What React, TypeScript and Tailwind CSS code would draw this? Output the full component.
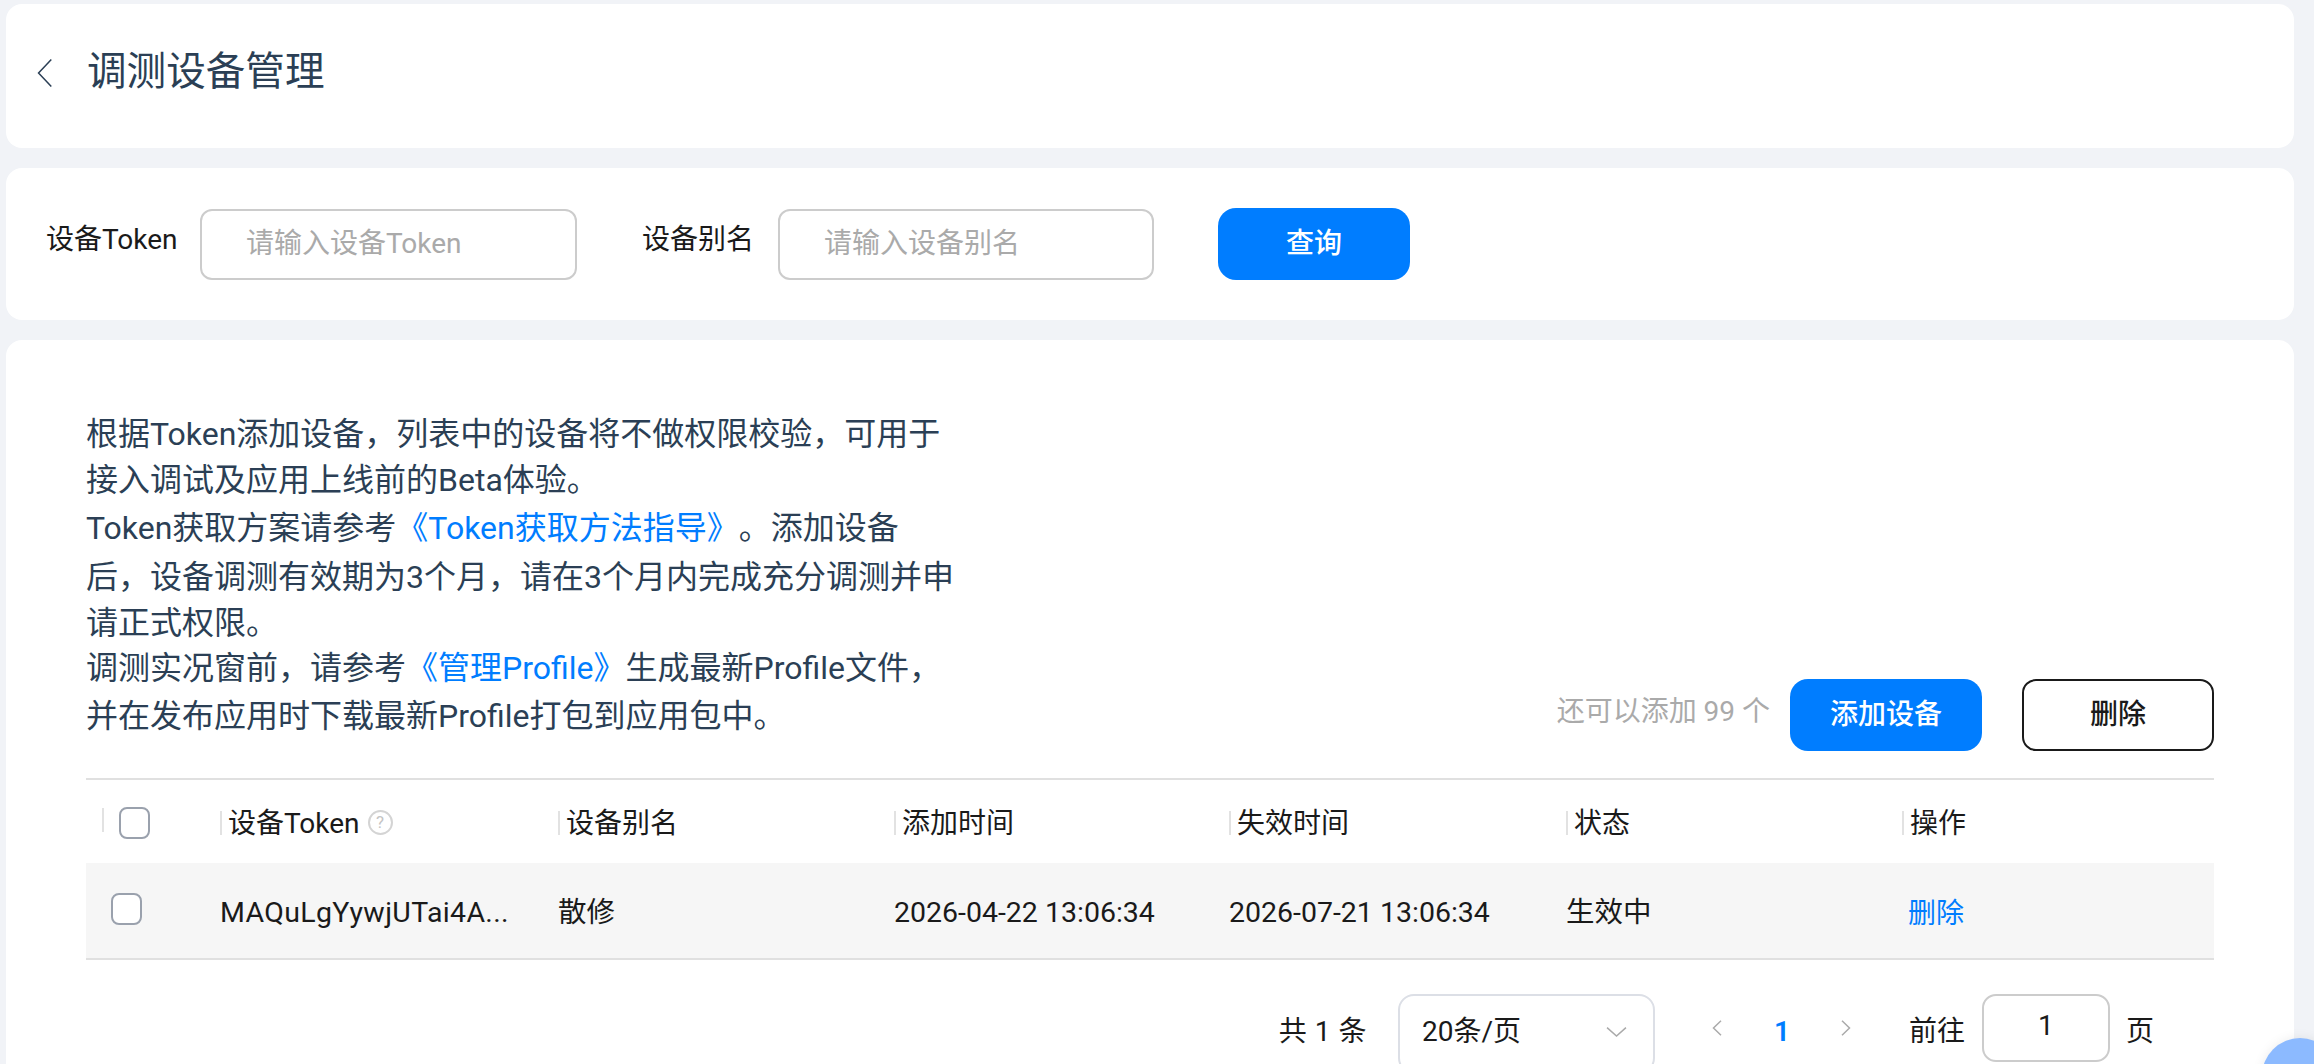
const cjk = "font-['Roboto','Noto_Sans_CJK_SC',sans-serif]";

const columns = ["设备别名", "添加时间", "失效时间", "状态", "操作"];

function Checkbox({ className }: { className: string }) {
    return <div className={`w-[31px] h-[32px] rounded-[8px] border-2 border-[#9aa1ad] bg-white ${className}`} />;
}

function Chevron({ d, className }: { d: string; className: string }) {
    return (
        <svg viewBox="0 0 20 20" preserveAspectRatio="none" className={className} fill="none" stroke="currentColor" strokeWidth="1.5">
            <path d={d} vectorEffect="non-scaling-stroke" />
        </svg>
    );
}

function HeaderCell({ label, children }: { label: string; children?: React.ReactNode }) {
    return (
        <div className="flex items-center h-full">
            <span className="w-[2px] h-[24px] bg-[#e2e2e2] mr-[6px] mt-[2px]" />
            <span className="pt-[4px]">{label}</span>
            {children}
        </div>
    );
}

export default function App() {
    return (
        <div className={`w-[2314px] h-[1064px] overflow-hidden relative bg-[#f1f3f7] pl-[6px] pr-[20px] pt-[4px] flex flex-col gap-[20px] text-[28px] leading-none text-[#1a1a1a] ${cjk}`}>
            <div className="h-[144px] shrink-0 bg-white rounded-[16px] flex items-center pl-[30px] text-[#2b3f55]">
                <Chevron d="M18 1 L3 10 L18 19" className="w-[17px] h-[30px] mb-[6px]" />
                <h1 className="ml-[34px] text-[39.6px] pb-[8px]">调测设备管理</h1>
            </div>

            <div className="h-[152px] shrink-0 bg-white rounded-[16px] flex items-center pl-[40px]">
                <label className="w-[154px] pb-[8px]">设备Token</label>
                <div className="w-[377px] h-[71px] border-2 border-[#cccccc] rounded-[12px] flex items-center pl-[44px] text-[#aaaaaa]">请输入设备Token</div>
                <label className="ml-[65px] w-[136px] pb-[8px]">设备别名</label>
                <div className="w-[376px] h-[71px] border-2 border-[#cccccc] rounded-[12px] flex items-center pl-[44px] text-[#aaaaaa]">请输入设备别名</div>
                <button className="ml-[64px] w-[192px] h-[72px] rounded-[18px] bg-[#007dff] text-white font-medium">查询</button>
            </div>

            <div className="flex-1 bg-white rounded-t-[16px] pl-[80px] pr-[80px]">
                <div className="flex items-end justify-between h-[440px] pb-[26px] border-b-2 border-[#e0e0e0]">
                    <div className="text-[#2b3f55] text-[32px] mb-[11px]">
                        <p className="h-[46px] flex items-center whitespace-pre">根据Token添加设备，列表中的设备将不做权限校验，可用于</p>
                        <p className="h-[46px] flex items-center whitespace-pre">接入调试及应用上线前的Beta体验。</p>
                        <p className="h-[50px] flex items-center whitespace-pre">
                            Token获取方案请参考<span className="text-[#007dff]">《Token获取方法指导》</span>。添加设备
                        </p>
                        <p className="h-[48px] flex items-center whitespace-pre">后，设备调测有效期为3个月，请在3个月内完成充分调测并申</p>
                        <p className="h-[44px] flex items-center whitespace-pre">请正式权限。</p>
                        <p className="h-[46px] flex items-center whitespace-pre">
                            调测实况窗前，请参考<span className="text-[#007dff]">《管理Profile》</span>生成最新Profile文件，
                        </p>
                        <p className="h-[50px] flex items-center whitespace-pre">并在发布应用时下载最新Profile打包到应用包中。</p>
                    </div>
                    <div className="flex items-center h-[72px] mb-[1px]">
                        <span className="text-[#aaaaaa] pb-[6px]">还可以添加 99 个</span>
                        <button className="ml-[20px] w-[192px] h-[72px] rounded-[18px] bg-[#007dff] text-white font-medium">添加设备</button>
                        <button className="ml-[40px] w-[192px] h-[72px] rounded-[14px] border-2 border-[#1a1a1a] bg-white font-medium">删除</button>
                    </div>
                </div>

                <div className="grid grid-cols-[134px_338px_336px_335px_337px_336px_1fr] h-[83px] items-center">
                    <div className="flex items-center h-full pl-[16px]">
                        <span className="w-[2px] h-[24px] bg-[#e2e2e2] mb-[4px]" />
                        <Checkbox className="ml-[15px] mt-[2px]" />
                    </div>
                    <HeaderCell label="设备Token">
                        <span className="ml-[8px] mt-[2px] w-[25px] h-[25px] rounded-full border-2 border-[#d4d4d4] text-[#c4c4c4] text-[17px] flex items-center justify-center">?</span>
                    </HeaderCell>
                    {columns.map((c) => (
                        <HeaderCell key={c} label={c} />
                    ))}
                </div>

                <div className="grid grid-cols-[134px_338px_336px_335px_337px_336px_1fr] h-[97px] items-center bg-[#f6f6f6] border-b-2 border-[#e0e0e0] text-[28.5px]">
                    <div className="pl-[25px]">
                        <Checkbox className="mb-[4px]" />
                    </div>
                    <div className="pt-[6px] tracking-[0.35px]">MAQuLgYywjUTai4A...</div>
                    <div className="pt-[6px]">散修</div>
                    <div className="pt-[6px]">2026-04-22 13:06:34</div>
                    <div className="pt-[6px]">2026-07-21 13:06:34</div>
                    <div className="pt-[6px]">生效中</div>
                    <div className="text-[#007dff] pl-[6px] pt-[6px] text-[28px]">删除</div>
                </div>

                <div className="flex items-start justify-end pt-[34px] pr-[60px]">
                    <span className="mt-[24px] mr-[31px] tracking-[0.5px]">共 1 条</span>
                    <div className="w-[257px] h-[80px] border-2 border-[#dcdfe6] rounded-[16px] flex items-start justify-between pt-[22px] pl-[22px] pr-[26px]">
                        <span>20条/页</span>
                        <Chevron d="M1 4 L10 17 L19 4" className="w-[21px] h-[13px] mt-[7px] text-[#aaaaaa]" />
                    </div>
                    <Chevron d="M18 1 L3 10 L18 19" className="ml-[57px] mt-[26px] w-[10px] h-[16px] text-[#aaaaaa]" />
                    <span className="ml-[52px] mt-[24px] text-[#007dff] font-semibold">1</span>
                    <Chevron d="M2 1 L17 10 L2 19" className="ml-[51px] mt-[26px] w-[10px] h-[16px] text-[#aaaaaa]" />
                    <span className="ml-[58px] mt-[24px]">前往</span>
                    <div className="ml-[17px] w-[128px] h-[68px] border-2 border-[#cccccc] rounded-[14px] flex items-center justify-center pb-[4px]">1</div>
                    <span className="ml-[16px] mt-[24px]">页</span>
                </div>
            </div>

            <div className="absolute left-[2262px] top-[1038px] w-[76px] h-[76px] rounded-full bg-[#8cbaff] shadow-[0_0_12px_rgba(0,0,0,0.08)]" />
        </div>
    );
}
